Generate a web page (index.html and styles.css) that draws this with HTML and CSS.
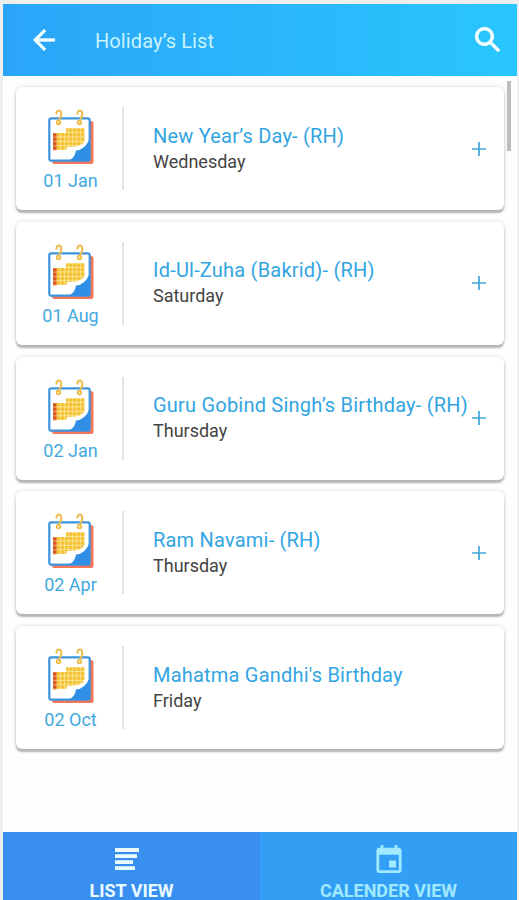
FILE: index.html
```html
<!DOCTYPE html>
<html lang="en">
<head>
<meta charset="utf-8">
<title>Holiday's List</title>
<link rel="stylesheet" href="styles.css">
</head>
<body>
<!-- calendar icon, shared by all the cards -->
<svg class="defs" width="0" height="0">
  <defs>
    <pattern id="days" x="7" y="20.6" width="4.05" height="4.4" patternUnits="userSpaceOnUse">
      <rect width="3" height="3.4" fill="#f2c02e"/>
    </pattern>
    <symbol id="calendar" viewBox="0 0 50 58">
      <rect x="6" y="13" width="41.5" height="43" rx="2.5" fill="#f4775a"/>
      <rect x="3.3" y="10.3" width="40.4" height="42.4" rx="2" fill="#fff" stroke="#3c94de" stroke-width="2.2"/>
      <path d="M43.500 31v20.500q0 1-1 1H23q6-3 7-10 9-.5 13.500-11.500z" fill="#2f8fe6"/>
      <path d="M7 25h13v-5h18.500v13q-3 5-10 5.500l-8 .5v3H7z" fill="#fce594"/>
      <path d="M7 25h13v-5h18.500v13q-3 5-10 5.500l-8 .5v3H7z" fill="url(#days)"/>
      <path d="M7 25h3.500v17.500H7z" fill="#f09a58"/>
      <path d="M7 25.400h3.500v3H7zM7 29.800h3.500v3H7zM7 34.200h3.500v3H7zM7 38.600h3.500v3H7z" fill="#dc5526"/>
      <g fill="none" stroke="#edbc4a" stroke-width="2">
        <path d="M10.500 6.500q-.3-4 2.300-4t2.400 4q0 3.500-2.400 4.500"/>
        <path d="M31.500 6.500q-.3-4 2.300-4t2.400 4q0 3.500-2.400 4.500"/>
      </g>
      <g fill="#fff0bd" stroke="#edb63b" stroke-width="1.500">
        <circle cx="12.500" cy="14.500" r="1.900"/>
        <circle cx="33.500" cy="14.500" r="1.900"/>
      </g>
    </symbol>
    <symbol id="plus" viewBox="0 0 14 14">
      <path d="M7 0v14M0 7h14" fill="none" stroke="#42a5dc" stroke-width="1.700"/>
    </symbol>
  </defs>
</svg>

<div class="screen">
  <div class="header">
    <svg class="back" viewBox="0 0 24 24" width="32" height="32"><path d="M20 11H7.830l5.590-5.590L12 4l-8 8 8 8 1.410-1.410L7.830 13H20v-2z"/></svg>
    <div class="title">Holiday’s List</div>
    <svg class="search" viewBox="0 0 24 24" width="34" height="34"><path d="M15.500 14h-.79l-.28-.27C15.410 12.590 16 11.110 16 9.500 16 5.910 13.090 3 9.500 3S3 5.910 3 9.500 5.910 16 9.500 16c1.610 0 3.090-.59 4.230-1.570l.27.28v.79l5 4.990L20.490 19l-4.990-5zm-6 0C7.010 14 5 11.990 5 9.500S7.010 5 9.500 5 14 7.010 14 9.500 11.990 14 9.500 14z"/></svg>
  </div>

  <div class="content">
    <div class="list">
      <div class="card">
        <div class="date"><svg class="cal"><use href="#calendar"/></svg><span>01 Jan</span></div>
        <div class="info"><div class="name">New Year’s Day- (RH)</div><div class="day">Wednesday</div></div>
        <svg class="plus"><use href="#plus"/></svg>
      </div>
      <div class="card">
        <div class="date"><svg class="cal"><use href="#calendar"/></svg><span>01 Aug</span></div>
        <div class="info"><div class="name">Id-Ul-Zuha (Bakrid)- (RH)</div><div class="day">Saturday</div></div>
        <svg class="plus"><use href="#plus"/></svg>
      </div>
      <div class="card">
        <div class="date"><svg class="cal"><use href="#calendar"/></svg><span>02 Jan</span></div>
        <div class="info"><div class="name">Guru Gobind Singh’s Birthday- (RH)</div><div class="day">Thursday</div></div>
        <svg class="plus"><use href="#plus"/></svg>
      </div>
      <div class="card">
        <div class="date"><svg class="cal"><use href="#calendar"/></svg><span>02 Apr</span></div>
        <div class="info"><div class="name">Ram Navami- (RH)</div><div class="day">Thursday</div></div>
        <svg class="plus"><use href="#plus"/></svg>
      </div>
      <div class="card">
        <div class="date"><svg class="cal"><use href="#calendar"/></svg><span>02 Oct</span></div>
        <div class="info"><div class="name">Mahatma Gandhi's Birthday</div><div class="day">Friday</div></div>
      </div>
    </div>
    <div class="scrollbar"></div>
  </div>

  <div class="tabs">
    <div class="tab active">
      <svg viewBox="0 0 24 24" width="24" height="24"><path d="M0 1h24v4H0zM0 7.300h22v3.700H0zM0 13.300h18v3.700H0zM0 19.300h20V23H0z"/></svg>
      <span>LIST VIEW</span>
    </div>
    <div class="tab">
      <svg viewBox="3 1 18 20" width="26" height="28"><path d="M17 12h-5v5h5v-5zM16 1v2H8V1H6v2H5c-1.110 0-1.990.9-1.990 2L3 19c0 1.100.89 2 2 2h14c1.100 0 2-.9 2-2V5c0-1.100-.9-2-2-2h-1V1h-2zm3 18H5V8h14v11z"/></svg>
      <span>CALENDER VIEW</span>
    </div>
  </div>
</div>
</body>
</html>
```

FILE: styles.css
```css
* { box-sizing: border-box; }

body {
  margin: 0;
  background: #eeeeee;
  font-family: Roboto, "Liberation Sans", sans-serif;
}

svg { display: block; flex: none; }

.defs { position: absolute; }

/* phone screen */
.screen {
  display: flex;
  flex-direction: column;
  height: 900px;
  padding: 4px 2px 0 3px;
  overflow: hidden;
}

.header {
  display: flex;
  align-items: center;
  height: 72px;
  flex: none;
  padding: 0 12px 0 25px;
  background: linear-gradient(90deg, #2ba5f8, #29c6fd);
}
.header svg {
  fill: #f3fdff;
  stroke: #f3fdff;
  stroke-width: .5;
}
.header .title {
  flex: 1;
  padding: 2px 0 0 35px;
  color: #c9f3ff;
  font-size: 20px;
  letter-spacing: .1px;
}

.content {
  display: flex;
  flex: 1;
  background: #fefefe;
}

.list {
  display: flex;
  flex-direction: column;
  gap: 11.8px;
  width: 488px;
  margin: 11px 3px 0 13px;
}

.card {
  display: flex;
  align-items: center;
  height: 123px;
  padding-right: 18px;
  border-radius: 6px;
  background: #fff;
  box-shadow: 0 3px 2px #b4b4b4, 0 0 4px rgba(0, 0, 0, .16);
}

.date {
  display: flex;
  flex-direction: column;
  align-items: center;
  width: 108px;
  height: 83px;
  padding-left: 3px;
  border-right: 2px solid #e2e2e2;
  color: #42a9df;
  font-size: 18px;
  line-height: 22px;
}
.cal {
  width: 50px;
  height: 58px;
  margin: 1px 0 4px;
}

.info {
  flex: 1;
  padding-left: 29px;
  white-space: nowrap;
}
.name {
  margin-top: -1px;
  color: #32a5e2;
  font-size: 20px;
  line-height: 27px;
  letter-spacing: .21px;
}
.day {
  color: #444;
  font-size: 18px;
  line-height: 24px;
}

.plus { width: 14px; height: 14px; }

.scrollbar {
  width: 4px;
  height: 70px;
  margin-top: 5px;
  background: #bdbdbd;
}

/* bottom tabs */
.tabs {
  display: flex;
  flex: none;
  height: 68px;
}
.tab {
  display: flex;
  flex: 1;
  flex-direction: column;
  align-items: center;
  justify-content: space-between;
  padding-top: 13px;
  background: #329ff5;
  color: #a0e9ff;
  fill: #a0e9ff;
  font-size: 18px;
  font-weight: 700;
  line-height: 18px;
}
.tab.active {
  padding-top: 15px;
  background: #388ff0;
  color: #e9fbff;
  fill: #e9fbff;
}
.tab.active svg { margin-right: 9px; }
```
